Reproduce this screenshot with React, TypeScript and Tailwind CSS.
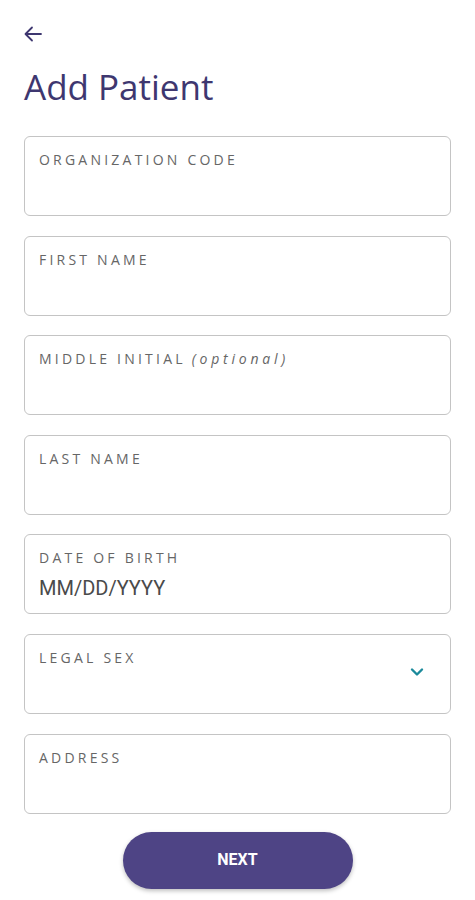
import React from 'react';

interface Field {
  label: string;
  optional?: boolean;
  placeholder?: string;
  select?: boolean;
}

const fields: Field[] = [
  { label: 'ORGANIZATION CODE' },
  { label: 'FIRST NAME' },
  { label: 'MIDDLE INITIAL', optional: true },
  { label: 'LAST NAME' },
  { label: 'DATE OF BIRTH', placeholder: 'MM/DD/YYYY' },
  { label: 'LEGAL SEX', select: true },
  { label: 'ADDRESS' },
];

function FieldBox({ field }: { field: Field }) {
  return (
    <div className="relative h-[80px] rounded-[6px] border border-[#c4c4c4] bg-white px-[14px] pt-[14px]">
      <div className="text-[14px] leading-[18px] tracking-[0.23em] text-[#666666] [font-family:'Open_Sans',sans-serif]">
        {field.label}
        {field.optional && (
          <span className="ml-[6px] italic tracking-[0.27em]">(optional)</span>
        )}
      </div>
      {field.placeholder && (
        <div className="mt-[8px] text-[20px] leading-[26px] text-[#4a4a4a] [font-family:Roboto,sans-serif]">
          {field.placeholder}
        </div>
      )}
      {field.select && (
        <svg
          className="absolute right-[26px] top-[32px]"
          width="14"
          height="10"
          viewBox="0 0 14 10"
          fill="none"
        >
          <path d="M2 2.5l5 5 5-5" stroke="#1b8a9b" strokeWidth="2.4" strokeLinecap="round" strokeLinejoin="round" />
        </svg>
      )}
    </div>
  );
}

export default function App() {
  return (
    <div className="min-h-[900px] w-[475px] bg-white px-[24px] pt-[24px] [font-family:'Open_Sans',sans-serif]">
      <button className="flex h-[20px] w-[20px] items-center">
        <svg width="18" height="16" viewBox="0 0 18 16" fill="none">
          <path d="M17 8H2M8 1.5L1.5 8 8 14.5" stroke="#3e3770" strokeWidth="1.8" strokeLinecap="round" strokeLinejoin="round" />
        </svg>
      </button>
      <h1 className="mt-[21px] text-[35px] leading-[44px] text-[#3e3770]">Add Patient</h1>
      <div className="mt-[27px] flex flex-col gap-[19.6px]">
        {fields.map((f) => (
          <FieldBox key={f.label} field={f} />
        ))}
      </div>
      <div className="mt-[18px] flex justify-center">
        <button className="h-[57px] w-[230px] rounded-full bg-[#4e4485] text-[16px] font-bold text-white shadow-[0_2px_4px_rgba(0,0,0,0.25)] [font-family:Roboto,sans-serif]">
          NEXT
        </button>
      </div>
    </div>
  );
}
